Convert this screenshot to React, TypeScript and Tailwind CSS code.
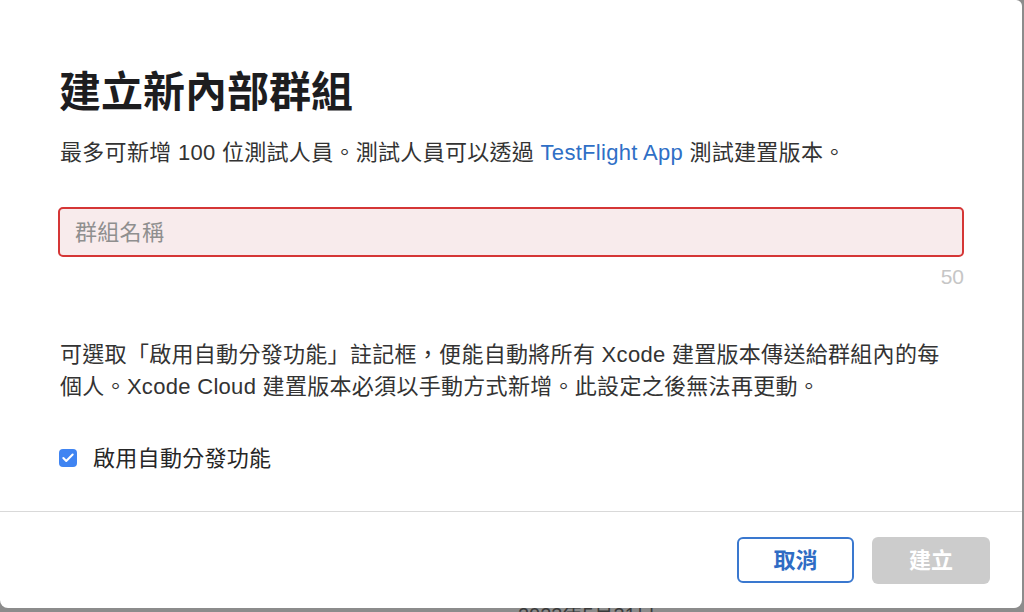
import { Check } from "lucide-react";

const font = {
  fontFamily: '"Liberation Sans", "Noto Sans CJK TC", sans-serif',
};

const App = () => {
  return (
    <div
      className="relative w-[1024px] h-[612px] overflow-hidden bg-[#8c8c8c]"
      style={font}
    >
      {/* page behind the modal */}
      <div className="absolute left-[518px] top-[603px] text-[20px] leading-[24px] text-[#3a3a3a]">
        2023年5月31日
      </div>

      <div className="absolute left-0 top-0 w-[1022px] h-[608px] bg-white rounded-b-[8px] rounded-tr-[6px] flex flex-col">
        <div className="px-[58px] pt-[69px] pb-[39px] border-b border-[#d9d9d9]">
          <h1 className="text-[42px] leading-[48px] font-bold text-[#1d1d1f] pl-[1px]">
            建立新內部群組
          </h1>
          <p className="mt-[22px] text-[22px] tracking-[0.3px] leading-[28px] text-[#333333] pl-[2px]">
            最多可新增 100 位測試人員。測試人員可以透過{" "}
            <span className="text-[#2f6fc6]">TestFlight App</span>{" "}
            測試建置版本。
          </p>

          <div className="mt-[40px] h-[50px] rounded-[5px] border-2 border-[#d53636] bg-[#f8ebec] flex items-center px-[15px]">
            <span className="text-[22px] tracking-[0.3px] text-[#8f8f8f]">群組名稱</span>
          </div>
          <div className="mt-[8px] text-right text-[21px] leading-[24px] text-[#c6c6c6]">
            50
          </div>

          <p className="mt-[50px] text-[22px] tracking-[0.3px] leading-[32px] text-[#333333] pl-[2px] whitespace-nowrap">
            可選取「啟用自動分發功能」註記框，便能自動將所有 Xcode
            建置版本傳送給群組內的每
            <br />
            個人。Xcode Cloud 建置版本必須以手動方式新增。此設定之後無法再更動。
          </p>

          <label className="mt-[41px] h-[28px] flex items-center gap-[16px] pl-[1px]">
            <span className="w-[18px] h-[18px] rounded-[4px] bg-[#3f84f2] flex items-center justify-center">
              <Check className="w-[14px] h-[14px] text-white" strokeWidth={3.5} />
            </span>
            <span className="text-[22px] tracking-[0.3px] text-[#262626]">
              啟用自動分發功能
            </span>
          </label>
        </div>

        <div className="flex justify-end gap-[18px] pt-[25px] pr-[32px]">
          <button className="w-[117px] h-[46px] rounded-[6px] border-2 border-[#3a78cf] bg-white text-[#2f6cc4] text-[22px] font-semibold">
            取消
          </button>
          <button className="w-[118px] h-[47px] rounded-[6px] bg-[#cccccc] text-white text-[22px] font-semibold">
            建立
          </button>
        </div>
      </div>
    </div>
  );
};

export default App;
